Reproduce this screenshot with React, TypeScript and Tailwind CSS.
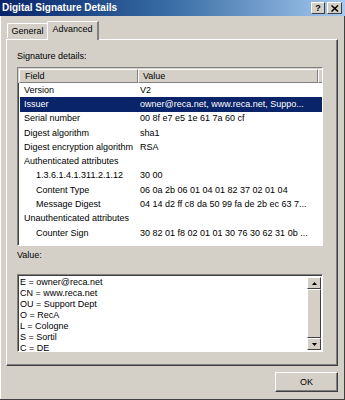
import React from 'react'

const rows = [
  { field: 'Version', value: 'V2' },
  { field: 'Issuer', value: 'owner@reca.net, www.reca.net, Suppo...', selected: true },
  { field: 'Serial number', value: '00 8f e7 e5 1e 61 7a 60 cf' },
  { field: 'Digest algorithm', value: 'sha1' },
  { field: 'Digest encryption algorithm', value: 'RSA' },
  { field: 'Authenticated attributes', value: '' },
  { field: '1.3.6.1.4.1.311.2.1.12', value: '30 00', indent: true },
  { field: 'Content Type', value: '06 0a 2b 06 01 04 01 82 37 02 01 04', indent: true },
  { field: 'Message Digest', value: '04 14 d2 ff c8 da 50 99 fa de 2b ec 63 7...', indent: true },
  { field: 'Unauthenticated attributes', value: '' },
  { field: 'Counter Sign', value: '30 82 01 f8 02 01 01 30 76 30 62 31 0b ...', indent: true },
]

const valueLines = [
  'E = owner@reca.net',
  'CN = www.reca.net',
  'OU = Support Dept',
  'O = RecA',
  'L = Cologne',
  'S = Sortil',
  'C = DE',
]

export default function App() {
  return (
    <div
      className="w-[345px] h-[400px] bg-[#d4d0c8] relative overflow-hidden text-[9px] text-black"
      style={{ fontFamily: '"Liberation Sans", Arial, sans-serif' }}
    >
      {/* Title bar */}
      <div className="h-[16px] flex items-center justify-between bg-gradient-to-r from-[#0a246a] via-[#3a6ea5] to-[#a6caf0] pl-[2px] pr-[3px]">
        <span className="text-white font-bold text-[10px] leading-none">Digital Signature Details</span>
        <div className="flex gap-[2px]">
          <div className="w-[14px] h-[12px] bg-[#d4d0c8] border-t border-l border-white border-r border-b border-r-[#404040] border-b-[#404040] flex items-center justify-center text-[9px] font-bold leading-none">?</div>
          <div className="w-[15px] h-[12px] bg-[#d4d0c8] border-t border-l border-white border-r border-b border-r-[#404040] border-b-[#404040] flex items-center justify-center">
            <svg width="8" height="7" viewBox="0 0 8 7">
              <path d="M0.5 0.5 L7 6.5 M7 0.5 L0.5 6.5" stroke="#000" strokeWidth="1.5" />
            </svg>
          </div>
        </div>
      </div>

      {/* Frame border lines */}
      <div className="absolute left-0 top-[16px] bottom-0 w-[2px] border-l border-white" />
      <div className="absolute right-0 top-[16px] bottom-0 w-[3px] border-r border-[#404040]" />
      <div className="absolute left-0 right-0 bottom-0 h-[2px] border-b border-[#404040]" />

      <div className="pl-[6px] pr-[7px]">
        {/* Tabs */}
        <div className="flex items-end h-[23px] pl-[1px] relative z-10">
          <div className="h-[15px] w-[41px] border-t border-l border-white rounded-tl-[2px] border-r border-r-[#808080] flex items-center justify-center leading-none mb-[1px]">
            General
          </div>
          <div className="h-[19px] w-[52px] -ml-[1px] border-t border-l border-white rounded-tl-[2px] border-r-2 border-r-[#808080] bg-[#d4d0c8] flex items-start justify-center pt-[3px] leading-none -mb-[1px]">
            Advanced
          </div>
        </div>

        {/* Panel */}
        <div className="h-[327px] border-t border-l border-white border-r border-b border-r-[#404040] border-b-[#404040] shadow-[inset_-1px_-1px_0_#808080] px-[10px] pt-[12px]">
          <div className="leading-none mb-[6px]">Signature details:</div>

          {/* Details list */}
          <div className="h-[179px] w-[306px] bg-white border-t border-l border-[#808080] border-r border-b border-r-white border-b-white shadow-[inset_1px_1px_0_#404040] overflow-hidden">
            <div className="flex h-[15px] bg-[#d4d0c8] pl-[1px] pt-[1px]">
              <div className="w-[119px] border-t border-l border-white border-r border-b border-r-[#808080] border-b-[#808080] flex items-center pl-[5px] leading-none">Field</div>
              <div className="w-[180px] border-t border-l border-white border-r border-b border-r-[#808080] border-b-[#808080] flex items-center pl-[4px] leading-none">Value</div>
              <div className="flex-1 border-t border-l border-white border-b border-b-[#808080]" />
            </div>
            {rows.map((r, i) => (
              <div
                key={i}
                className={
                  'flex h-[14.3px] items-center leading-none ml-[2px] ' +
                  (r.selected ? 'bg-[#0a246a] text-white' : '')
                }
              >
                <div className={'w-[118px] shrink-0 whitespace-nowrap ' + (r.indent ? 'pl-[16px]' : 'pl-[4px]')}>
                  {r.field}
                </div>
                <div className="whitespace-nowrap pl-[2px]">{r.value}</div>
              </div>
            ))}
          </div>

          <div className="leading-none mt-[5px] mb-[14px]">Value:</div>

          {/* Value box */}
          <div className="h-[78px] w-[306px] bg-white border-t border-l border-[#808080] border-r border-b border-r-white border-b-white shadow-[inset_1px_1px_0_#404040] flex overflow-hidden">
            <div className="flex-1 pl-[2px] pt-[2px] overflow-hidden">
              {valueLines.map((l, i) => (
                <div key={i} className="h-[11px] leading-[11px] whitespace-nowrap">{l}</div>
              ))}
            </div>
            <div className="w-[14px] flex flex-col bg-[#ece9e2] mt-[2px] mb-[1px] mr-[1px]">
              <div className="h-[12px] bg-[#d4d0c8] border-t border-l border-white border-r border-b border-r-[#404040] border-b-[#404040] flex items-center justify-center">
                <svg width="5" height="3" viewBox="0 0 5 3"><path d="M2.5 0 L5 3 L0 3 Z" fill="#000" /></svg>
              </div>
              <div className="flex-1 bg-[#d4d0c8] border-t border-l border-white border-r border-b border-r-[#404040] border-b-[#404040]" />
              <div className="h-[12px] bg-[#d4d0c8] border-t border-l border-white border-r border-b border-r-[#404040] border-b-[#404040] flex items-center justify-center">
                <svg width="5" height="3" viewBox="0 0 5 3"><path d="M0 0 L5 0 L2.5 3 Z" fill="#000" /></svg>
              </div>
            </div>
          </div>
        </div>

        {/* Buttons */}
        <div className="flex justify-end mt-[6px]">
          <div className="w-[63px] h-[20px] border-t border-l border-white border-r border-b border-r-[#404040] border-b-[#404040] shadow-[inset_-1px_-1px_0_#808080] flex items-center justify-center leading-none">
            OK
          </div>
        </div>
      </div>
    </div>
  )
}
